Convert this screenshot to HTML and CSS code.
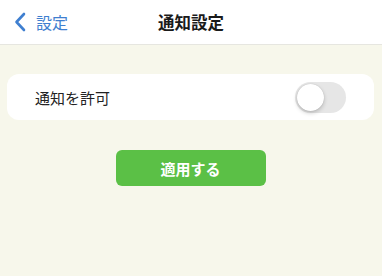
FILE: index.html
```html
<!DOCTYPE html>
<html>
<head>
<link rel="stylesheet" href="styles.css">
</head>
<body>

<div class="nav-bar">
    <a class="back-link">
        <svg class="back-icon" width="12" height="20" viewBox="0 0 12 20"><path d="M10 2 L2.5 10 L10 18" fill="none" stroke="#3f7fd0" stroke-width="2.6" stroke-linecap="round" stroke-linejoin="round"/></svg>
        <span>設定</span>
    </a>
    <h1 class="nav-title">通知設定</h1>
</div>

<div class="content">
    <div class="setting-card">
        <span class="setting-label">通知を許可</span>
        <div class="switch"><span class="knob"></span></div>
    </div>
    <button class="apply-btn">適用する</button>
</div>

</body>
</html>
```

FILE: styles.css
```css
body {
    margin: 0;
    background-color: #f7f7eb;
    font-family: "Noto Sans CJK JP", "Noto Sans", sans-serif;
    height: 276px;
    overflow: hidden;
}

.nav-bar {
    position: relative;
    height: 44px;
    background-color: #fff;
    border-bottom: 1px solid #e6e6e0;
    display: flex;
    align-items: center;
    justify-content: center;
}

.back-link {
    position: absolute;
    left: 14px;
    top: 0;
    height: 44px;
    display: flex;
    align-items: center;
    gap: 10px;
    color: #3f7fd0;
    font-size: 16px;
}

.nav-title {
    margin: 0;
    font-size: 16.5px;
    font-weight: bold;
    color: #1a1a1a;
}

.content {
    padding: 29px 8px 0 7px;
    display: flex;
    flex-direction: column;
    align-items: center;
}

.setting-card {
    box-sizing: border-box;
    width: 100%;
    height: 46px;
    background-color: #fff;
    border-radius: 12px;
    display: flex;
    align-items: center;
    justify-content: space-between;
    padding: 0 28px 0 28px;
}

.setting-label {
    font-size: 15px;
    color: #222;
}

.switch {
    position: relative;
    width: 51px;
    height: 31px;
    border-radius: 16px;
    background-color: #e6e6e6;
}

.switch .knob {
    position: absolute;
    top: 2px;
    left: 2px;
    width: 27px;
    height: 27px;
    border-radius: 50%;
    background-color: #fff;
    box-shadow: 0 2px 4px rgba(0, 0, 0, 0.2), 0 0 1px rgba(0, 0, 0, 0.2);
}

.apply-btn {
    margin-top: 30px;
    width: 150px;
    height: 36px;
    border: none;
    border-radius: 6px;
    background-color: #5bc046;
    color: #fff;
    font-family: inherit;
    font-size: 15px;
    font-weight: bold;
}
```
